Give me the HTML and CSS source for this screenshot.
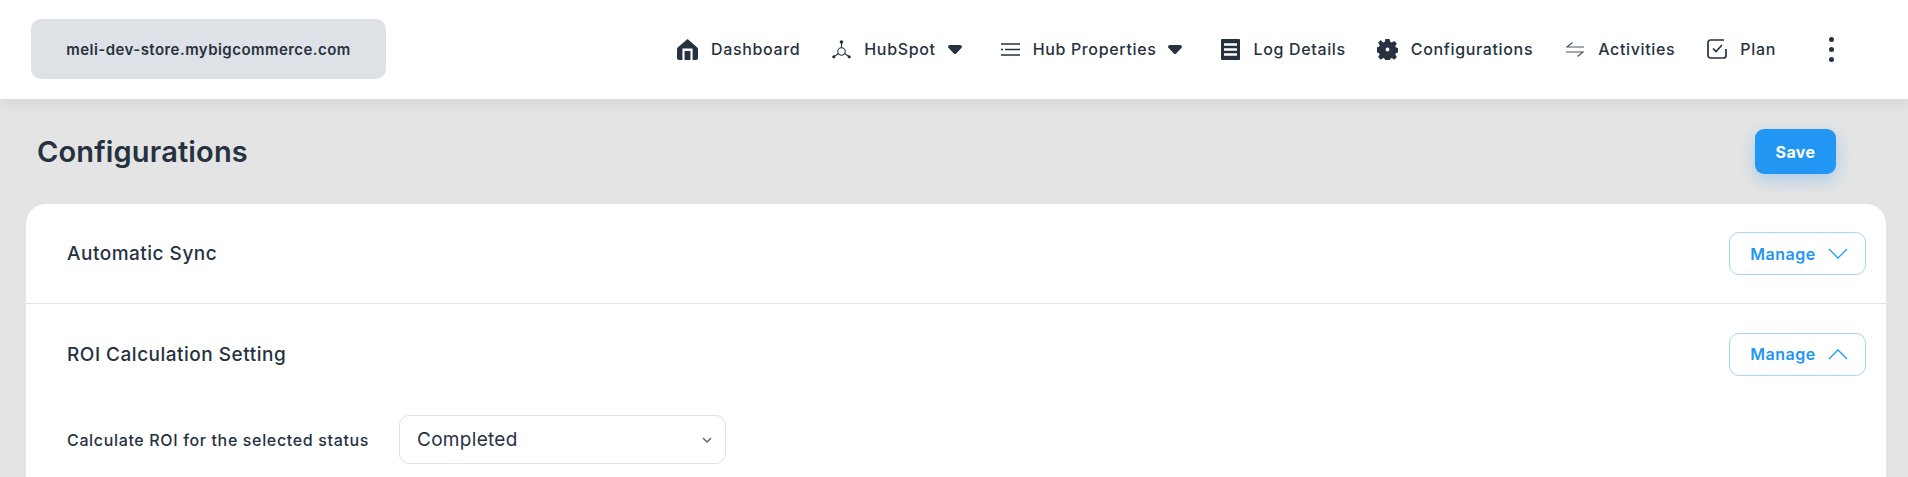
FILE: index.html
```html
<!DOCTYPE html>
<html lang="en">

<head>
    <meta charset="UTF-8">
    <title>Configurations</title>
    <link rel="stylesheet" href="styles.css">
</head>

<body>
    <header class="topbar">
        <div class="store-pill">meli-dev-store.mybigcommerce.com</div>
        <nav class="nav">
            <a class="nav-item nav-dashboard">
                <svg class="nav-icon" width="21" height="21" viewBox="0 0 21 21"><path fill="#26323f" fill-rule="evenodd" d="M10.5 0 14 3 20 8.200c.7.6 1 1.200 1 2V19a2 2 0 0 1-2 2h-3.400V9.600H5.400V21H2a2 2 0 0 1-2-2v-8.800c0-.8.3-1.400 1-2zM7.600 12h5.800v9H7.600z"/></svg>
                <span>Dashboard</span>
            </a>
            <a class="nav-item nav-hubspot">
                <svg class="nav-icon" width="19" height="19" viewBox="0 0 19 19" fill="none" stroke="#26323f" stroke-width="1.100"><circle cx="9.500" cy="2" r="1.800" fill="#26323f" stroke="none"/><circle cx="1.800" cy="16.800" r="1.600" fill="#26323f" stroke="none"/><circle cx="17.200" cy="16.800" r="1.600" fill="#26323f" stroke="none"/><circle cx="9.500" cy="11.500" r="3.700"/><path d="M9.500 2v6M2 16.500l4.500-3M17 16.500l-4.500-3"/></svg>
                <span>HubSpot</span>
                <svg class="nav-caret" width="14" height="9" viewBox="0 0 14 9"><path fill="#26323f" d="M2 0h10c1.700 0 2.500 1.700 1.400 3L8.200 8.400c-.7.700-1.700.7-2.400 0L.6 3C-.5 1.700.3 0 2 0z"/></svg>
            </a>
            <a class="nav-item nav-props">
                <svg class="nav-icon" width="19" height="13" viewBox="0 0 19 13" fill="none" stroke="#26323f" stroke-width="1.600"><path d="M0 1h19M0 6.500h2M4 6.500h15M0 12h19"/></svg>
                <span>Hub Properties</span>
                <svg class="nav-caret" width="14" height="9" viewBox="0 0 14 9"><path fill="#26323f" d="M2 0h10c1.700 0 2.500 1.700 1.400 3L8.200 8.400c-.7.700-1.700.7-2.400 0L.6 3C-.5 1.700.3 0 2 0z"/></svg>
            </a>
            <a class="nav-item nav-log">
                <svg class="nav-icon" width="19" height="21" viewBox="0 0 19 21"><path fill="#26323f" fill-rule="evenodd" d="M1 0h17a1 1 0 0 1 1 1v19a1 1 0 0 1-1 1H1a1 1 0 0 1-1-1V1a1 1 0 0 1 1-1zM3 4.200v2.600h13V4.200zM3 9.200v2.600h13V9.200zM3 14.200v2.600h13v-2.600z"/></svg>
                <span>Log Details</span>
            </a>
            <a class="nav-item nav-config">
                <svg class="nav-icon" width="21" height="21" viewBox="0 0 24 24"><path fill="#26323f" fill-rule="evenodd" d="M9.600 0h4.800l.7 3.200 1.800.8 2.800-1.800 3 3-1.800 2.800.8 1.800 3.300.7v4.800l-3.300.7-.8 1.800 1.800 2.800-3 3-2.800-1.800-1.800.8-.7 3.400H9.600l-.7-3.400-1.800-.8-2.800 1.800-3-3 1.800-2.800-.8-1.800-3.300-.7V9.500l3.300-.7.8-1.800-1.800-2.800 3-3L7.100 4l1.800-.8zM12 9.800a2.200 2.200 0 1 0 0 4.400 2.200 2.200 0 0 0 0-4.400z"/></svg>
                <span>Configurations</span>
            </a>
            <a class="nav-item nav-activities">
                <svg class="nav-icon" width="18" height="15" viewBox="0 0 18 15" fill="none" stroke="#4a545e" stroke-width="1.100"><path d="M18 5H1l5.500-4.500M0 10h17l-5.500 4.500"/></svg>
                <span>Activities</span>
            </a>
            <a class="nav-item nav-plan">
                <svg class="nav-icon" width="20" height="20" viewBox="0 0 20 20" fill="none" stroke="#26323f" stroke-width="1.700"><path d="M19 10v6.500a2.500 2.500 0 0 1-2.500 2.500h-13A2.500 2.500 0 0 1 1 16.500v-13A2.500 2.500 0 0 1 3.500 1H17"/><path d="M6 9.500l3 3L15 6"/></svg>
                <span>Plan</span>
            </a>
            <span class="nav-dots"><i></i><i></i><i></i></span>
        </nav>
    </header>

    <div class="page-head">
        <h1>Configurations</h1>
        <button class="btn-save">Save</button>
    </div>

    <main class="card">
        <section class="row">
            <h2>Automatic Sync</h2>
            <button class="btn-manage">Manage
                <svg width="20" height="11" viewBox="0 0 20 11" fill="none" stroke="#2196f3" stroke-width="1.300"><path d="M1 1l9 9 9-9"/></svg>
            </button>
        </section>
        <section class="row row-open">
            <h2>ROI Calculation Setting</h2>
            <button class="btn-manage">Manage
                <svg width="20" height="11" viewBox="0 0 20 11" fill="none" stroke="#2196f3" stroke-width="1.300"><path d="M1 10l9-9 9 9"/></svg>
            </button>
        </section>
        <div class="field">
            <label>Calculate ROI for the selected status</label>
            <div class="select">
                Completed
                <svg width="10" height="6" viewBox="0 0 10 6" fill="none" stroke="#5c6670" stroke-width="1.500"><path d="M1 1l4 4 4-4"/></svg>
            </div>
        </div>
    </main>
</body>

</html>
```

FILE: styles.css
```css
html,
body {
    height: 100%;
}

body {
    margin: 0;
    overflow: hidden;
    display: flex;
    flex-direction: column;
    background-color: #e4e4e4;
    color: #26323f;
    font-family: Inter, "Liberation Sans", sans-serif;
}

/* Top bar */
.topbar {
    height: 99px;
    box-sizing: border-box;
    flex: none;
    display: flex;
    align-items: center;
    padding: 0 0 1px 31px;
    background-color: #fff;
    box-shadow: 0 4px 14px rgba(0, 0, 0, 0.07);
    position: relative;
}

.store-pill {
    width: 355px;
    height: 60px;
    display: flex;
    align-items: center;
    justify-content: center;
    border-radius: 10px;
    background-color: #dee1e6;
    font-size: 15px;
    font-weight: 600;
    letter-spacing: 0.45px;
}

.nav {
    display: flex;
    align-items: center;
    margin-left: 291px;
    font-size: 16px;
    font-weight: 500;
    letter-spacing: 0.65px;
}

.nav-item {
    display: flex;
    align-items: center;
    white-space: nowrap;
}

.nav-icon {
    margin-right: 13px;
}

.nav-caret {
    margin-left: 12px;
}

.nav-hubspot {
    margin-left: 32px;
}

.nav-props {
    margin-left: 39px;
}

.nav-log {
    margin-left: 39px;
}

.nav-config {
    margin-left: 31px;
}

.nav-activities {
    margin-left: 33px;
}

.nav-activities .nav-icon {
    margin-right: 14px;
}

.nav-plan {
    margin-left: 32px;
}

.nav-dots {
    margin-left: 53px;
    display: flex;
    flex-direction: column;
    gap: 5px;
}

.nav-dots i {
    width: 5px;
    height: 5px;
    border-radius: 50%;
    background-color: #26323f;
}

/* Page heading */
.page-head {
    height: 105px;
    flex: none;
    display: flex;
    align-items: center;
    justify-content: space-between;
    padding: 0 72px 0 37px;
}

.page-head h1 {
    margin: 0;
    font-size: 29px;
    font-weight: 600;
    letter-spacing: 0.15px;
}

.btn-save {
    width: 81px;
    height: 45px;
    border: 0;
    border-radius: 9px;
    background-color: #2196f3;
    color: #fff;
    font-family: inherit;
    font-size: 16px;
    font-weight: 700;
    letter-spacing: 0.4px;
    box-shadow: 0 6px 16px rgba(33, 150, 243, 0.3);
}

/* Settings card */
.card {
    flex: 1;
    margin: 0 22px 0 26px;
    border-radius: 20px 20px 0 0;
    background-color: #fff;
}

.row {
    height: 99px;
    display: flex;
    align-items: center;
    justify-content: space-between;
    padding: 0 20px 0 41px;
    border-bottom: 1px solid #e2e5e9;
}

.row-open {
    height: 100px;
    border-bottom: 0;
}

.row h2 {
    margin: 0;
    font-size: 19px;
    font-weight: 500;
    letter-spacing: 0.5px;
}

.btn-manage {
    width: 137px;
    height: 43px;
    display: flex;
    align-items: center;
    justify-content: center;
    gap: 12px;
    padding: 0 0 0 3px;
    border: 1px solid #a6d5fa;
    border-radius: 10px;
    background-color: #fff;
    color: #2196f3;
    font-family: inherit;
    font-size: 16px;
    font-weight: 600;
    letter-spacing: 0.5px;
}

.field {
    display: flex;
    align-items: center;
    padding: 11px 0 0 41px;
}

.field label {
    width: 332px;
    font-size: 16px;
    font-weight: 500;
    letter-spacing: 0.65px;
}

.select {
    width: 327px;
    height: 49px;
    box-sizing: border-box;
    display: flex;
    align-items: center;
    justify-content: space-between;
    padding: 0 13px 0 17px;
    border: 1px solid #dee2e6;
    border-radius: 10px;
    font-size: 19px;
    letter-spacing: 0.3px;
}
```
